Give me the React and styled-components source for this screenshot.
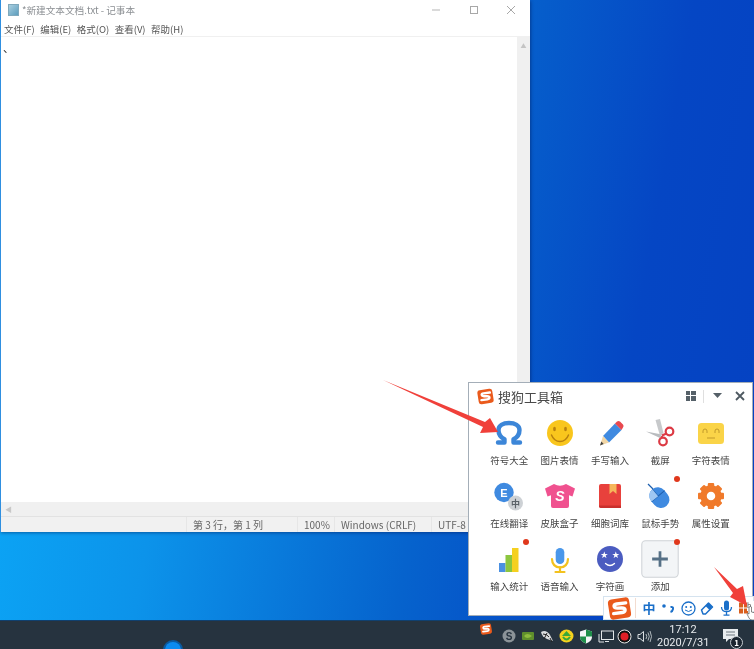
import styled, { createGlobalStyle } from "styled-components";
import { Fragment } from "react";

const GlobalStyle = createGlobalStyle`
  html, body {
    margin: 0;
    padding: 0;
    background: #0558c8;
  }
  body {
    font-family: "Noto Sans CJK SC", "Liberation Sans", sans-serif;
  }
`;

const SogouLogo = ({ size = 18 }) => (
  <svg width={size} height={size} viewBox="0 0 24 24">
    <rect x="2.5" y="3" width="19" height="18" rx="3.5" fill="#ea5a1c" transform="rotate(-9 12 12)" />
    <path d="M17.5 7 L9.5 8 Q6.8 8.4 7.2 10.2 Q7.5 11.7 10 11.7 L14 11.5 Q17 11.5 17 13.4 Q17 15.3 14.4 15.6 L6.8 16.6" fill="none" stroke="#fff" strokeWidth="3" strokeLinecap="round" />
  </svg>
);

const Omega = () => (
  <svg width="36" height="36" viewBox="0 0 36 36">
    <path d="M7 27.500h6.500v-3.200c-4-2-6-5.300-6-9.300C7.500 10.500 12 8 18 8s10.500 2.500 10.500 7c0 4-2 7.300-6 9.300v3.200H29" fill="none" stroke="#3c86d8" strokeWidth="4.400" strokeLinejoin="round" strokeLinecap="round" />
  </svg>
);

const Smile = () => (
  <svg width="36" height="36" viewBox="0 0 36 36">
    <circle cx="18" cy="18" r="13" fill="#f9c61d" />
    <ellipse cx="12.500" cy="14" rx="1.400" ry="2.200" fill="#b9810f" />
    <ellipse cx="23.500" cy="14" rx="1.400" ry="2.200" fill="#b9810f" />
    <path d="M9.500 20c2 5 5.500 6.500 8.500 6.500s6.500-1.500 8.500-6.500" fill="none" stroke="#b9810f" strokeWidth="1.500" strokeLinecap="round" />
  </svg>
);

const Pencil = () => (
  <svg width="36" height="36" viewBox="0 0 36 36">
    <path d="M11 21 23 8.500l6.500 6.500L17 27.500z" fill="#3f8ae0" />
    <path d="M23 8.500l2-2q1.500-1.200 3 0l3 3q1.200 1.500 0 3L29.500 15z" fill="#e8484f" />
    <path d="M11 21 17 27.500 8 30.500z" fill="#f1d6a6" />
    <path d="M9.300 26.500 11.700 29 8 30.500z" fill="#444" />
  </svg>
);

const Scissors = () => (
  <svg width="36" height="36" viewBox="0 0 36 36">
    <path d="M4 16.500 20 19.500 18 23z" fill="#b9bcbf" />
    <path d="M13.500 5 18 4 21.500 18 18 21z" fill="#c7c9cb" />
    <circle cx="27.500" cy="16.500" r="3.800" fill="none" stroke="#dc3a44" strokeWidth="2.200" />
    <circle cx="21" cy="26.500" r="3.800" fill="none" stroke="#dc3a44" strokeWidth="2.200" />
    <path d="M20 20.500 24.500 18.500M19.800 21 20.500 23" stroke="#dc3a44" strokeWidth="2" />
  </svg>
);

const CharFace = () => (
  <svg width="36" height="36" viewBox="0 0 36 36">
    <rect x="5" y="8" width="26" height="21" rx="3.500" fill="#fad448" />
    <path d="M10 18v-2q0-2 2-2t2 2v2M22 18v-2q0-2 2-2t2 2v2M14 23h8" fill="none" stroke="#c29a2b" strokeWidth="1" />
  </svg>
);

const Translate = () => (
  <svg width="36" height="36" viewBox="0 0 36 36">
    <circle cx="13" cy="14.500" r="9.700" fill="#3f8ae0" />
    <text x="13" y="18.500" fontSize="11" fontWeight="700" fill="#fff" textAnchor="middle" fontFamily="Liberation Sans, sans-serif">E</text>
    <circle cx="24.500" cy="25" r="7.500" fill="#cdd1d5" />
    <text x="24.500" y="28.500" fontSize="9" fontWeight="700" fill="#5b6369" textAnchor="middle" fontFamily="Noto Sans CJK SC, sans-serif">中</text>
  </svg>
);

const Shirt = () => (
  <svg width="36" height="36" viewBox="0 0 36 36">
    <path d="M12 6q6 3.500 12 0l9 4.500-2.500 8-3.500-1.300V28q0 2-2 2H11q-2 0-2-2V17.200l-3.500 1.300L3 10.500z" fill="#f0518f" />
    <text x="18" y="23" fontSize="14" fontWeight="700" fontStyle="italic" fill="#fff" textAnchor="middle" fontFamily="Liberation Sans, sans-serif">S</text>
  </svg>
);

const Book = () => (
  <svg width="36" height="36" viewBox="0 0 36 36">
    <path d="M7 8q0-2 2-2h18q2 0 2 2v22H9q-2 0-2-2z" fill="#e8413c" />
    <path d="M7 27.500h22V30H9q-2 0-2-2z" fill="#c9302d" />
    <path d="M17.500 6h7v10l-3.500-3-3.500 3z" fill="#f6b65a" />
  </svg>
);

const Mouse = () => (
  <svg width="36" height="36" viewBox="0 0 36 36">
    <g transform="rotate(-40 17 20)">
      <rect x="9" y="9" width="17" height="22" rx="8.500" fill="#3f8ae0" />
      <path d="M9 18h17M17.500 9v9" stroke="#1d5fae" strokeWidth="1" />
      <path d="M9 18a8.500 8.500 0 0 1 8.500-9v9z" fill="#9fc7f2" />
    </g>
    <path d="M6 6 11 11" stroke="#1d5fae" strokeWidth="1.200" />
  </svg>
);

const Gear = () => (
  <svg width="36" height="36" viewBox="0 0 36 36">
    <circle cx="18" cy="18" r="7.500" fill="none" stroke="#f07a2b" strokeWidth="6.500" />
    {[0, 45, 90, 135, 180, 225, 270, 315].map((a) => (
      <rect key={a} x="14.800" y="5" width="6.400" height="6" rx="1" fill="#f07a2b" transform={`rotate(${a} 18 18)`} />
    ))}
  </svg>
);

const Bars = () => (
  <svg width="36" height="36" viewBox="0 0 36 36">
    <rect x="8" y="22" width="6.500" height="9" fill="#4a90e2" />
    <rect x="14.500" y="14" width="6.500" height="17" fill="#8cc63f" />
    <rect x="21" y="7" width="6.500" height="24" fill="#f5d020" />
  </svg>
);

const Mic = () => (
  <svg width="36" height="36" viewBox="0 0 36 36">
    <rect x="13.700" y="7" width="8.600" height="16" rx="4.300" fill="#4a97ea" />
    <path d="M10 18c0 5 3.200 8.500 8 8.500s8-3.500 8-8.500" fill="none" stroke="#f3c21e" strokeWidth="2.200" strokeLinecap="round" />
    <path d="M18 26v4.500M13.500 31h9" stroke="#f3c21e" strokeWidth="2.200" strokeLinecap="round" />
  </svg>
);

const StarFace = () => (
  <svg width="36" height="36" viewBox="0 0 36 36">
    <circle cx="18" cy="18" r="13" fill="#4b5cc0" />
    <text x="12.300" y="17" fontSize="9" fill="#fff" textAnchor="middle" fontFamily="DejaVu Sans, sans-serif">★</text>
    <text x="23.700" y="17" fontSize="9" fill="#fff" textAnchor="middle" fontFamily="DejaVu Sans, sans-serif">★</text>
    <path d="M13.500 22.500q4.500 4 9 0" fill="none" stroke="#fff" strokeWidth="1.300" strokeLinecap="round" />
  </svg>
);

const Plus = () => (
  <svg width="36" height="36" viewBox="0 0 36 36">
    <path d="M18 10v16M10 18h16" stroke="#567086" strokeWidth="2.800" />
  </svg>
);

const tools = [
  { name: "符号大全", Icon: Omega },
  { name: "图片表情", Icon: Smile },
  { name: "手写输入", Icon: Pencil },
  { name: "截屏", Icon: Scissors },
  { name: "字符表情", Icon: CharFace },
  { name: "在线翻译", Icon: Translate },
  { name: "皮肤盒子", Icon: Shirt },
  { name: "细胞词库", Icon: Book },
  { name: "鼠标手势", Icon: Mouse, dot: true },
  { name: "属性设置", Icon: Gear },
  { name: "输入统计", Icon: Bars, dot: true },
  { name: "语音输入", Icon: Mic },
  { name: "字符画", Icon: StarFace },
  { name: "添加", Icon: Plus, dot: true, boxed: true },
];

const menus = ["文件(F)", "编辑(E)", "格式(O)", "查看(V)", "帮助(H)"];

const statusCells = [
  { text: "第 3 行，第 1 列", width: 111 },
  { text: "100%", width: 37 },
  { text: "Windows (CRLF)", width: 97 },
  { text: "UTF-8", width: 99 },
];

const Desktop = styled.div`
  position: relative;
  width: 754px;
  height: 649px;
  overflow: hidden;
  display: flex;
  flex-direction: column;
  background: linear-gradient(100deg, #0bacfa 0%, #0c93ea 28%, #0663cd 58%, #0546c4 80%, #0541c2 100%);
  filter: blur(0.35px);
`;

const Workspace = styled.div`
  flex: 1;
  min-height: 0;
`;

const Notepad = styled.div`
  width: 530px;
  height: 532px;
  box-sizing: border-box;
  display: flex;
  flex-direction: column;
  background: #fff;
  border-left: 1.500px solid #2f8fe0;
  box-shadow: 1px 1px 3px rgba(0, 20, 80, 0.45);
`;

const TitleBar = styled.div`
  height: 19px;
  flex-shrink: 0;
  display: flex;
  align-items: center;
  padding-left: 7px;
  font-size: 9.650px;
  color: #8b8f93;
`;

const DocIcon = styled.span`
  width: 11px;
  height: 12px;
  margin-right: 3px;
  background: linear-gradient(135deg, #a9cfe0, #5d9dbd);
  border: 1px solid #7fa9bd;
  box-sizing: border-box;
`;

const WindowButtons = styled.div`
  margin-left: auto;
  display: flex;
`;

const WindowButton = styled.span`
  width: 37.500px;
  display: flex;
  justify-content: center;
`;

const MenuBar = styled.div`
  height: 18px;
  flex-shrink: 0;
  box-sizing: border-box;
  display: flex;
  align-items: center;
  gap: 5.500px;
  padding: 2px 0 0 3px;
  font-size: 9.500px;
  color: #555;
  border-bottom: 1px solid #f0f0f0;
`;

const Body = styled.div`
  flex: 1;
  min-height: 0;
  display: flex;
`;

const Editor = styled.div`
  flex: 1;
  padding: 3px 2px;
  font-size: 11px;
  line-height: 14px;
  color: #222;
`;

const VScroll = styled.div`
  width: 13px;
  background: #f0f0f0;
  color: #c4c4c4;
  font-size: 6px;
  text-align: center;
  padding-top: 4px;
  box-sizing: border-box;
`;

const HScroll = styled.div`
  height: 14px;
  flex-shrink: 0;
  background: #f0f0f0;
  color: #c8c8c8;
  font-size: 7px;
  line-height: 14px;
  padding-left: 4px;
`;

const StatusBar = styled.div`
  height: 16px;
  flex-shrink: 0;
  box-sizing: border-box;
  display: flex;
  padding-left: 185px;
  background: #f1f1f1;
  border-top: 1px solid #e2e2e2;
  font-size: 10px;
  line-height: 15px;
  color: #666;
`;

const StatusCell = styled.div`
  width: ${(p) => p.$w}px;
  flex-shrink: 0;
  padding-left: 6px;
  box-sizing: border-box;
  border-left: 1px solid #e6e6e6;
  white-space: nowrap;
`;

const ToolBox = styled.div`
  position: absolute;
  left: 468px;
  top: 382px;
  width: 285px;
  height: 234px;
  box-sizing: border-box;
  background: #fff;
  border: 1px solid #a4aeb8;
  padding: 0 0 0 15px;
`;

const BoxHeader = styled.div`
  height: 26px;
  display: flex;
  align-items: center;
  margin-left: -8px;
  padding-right: 7px;
`;

const BoxTitle = styled.span`
  font-size: 13px;
  color: #4a4a4a;
  margin-left: 3px;
`;

const HeaderTools = styled.div`
  margin-left: auto;
  display: flex;
  align-items: center;
`;

const Divider = styled.span`
  width: 1px;
  height: 13px;
  background: #dfdfdf;
  margin: 0 9px 0 7px;
`;

const CloseIcon = styled.svg`
  margin-left: 13px;
`;

const ToolGrid = styled.div`
  margin-top: 6px;
  display: grid;
  grid-template-columns: repeat(5, 50.400px);
  grid-auto-rows: 63px;
`;

const Tool = styled.div`
  position: relative;
  display: flex;
  flex-direction: column;
  align-items: center;
`;

const ToolIcon = styled.div`
  width: 36px;
  height: 36px;
  box-sizing: border-box;
  display: flex;
  align-items: center;
  justify-content: center;
  ${(p) =>
    p.$boxed &&
    `
    border: 1px solid #cfd3d7;
    border-radius: 4px;
    background: #f3f5f7;
    transform: scale(1.040);
  `}
`;

const ToolLabel = styled.span`
  margin-top: 2px;
  font-size: 9.500px;
  line-height: 14px;
  color: #444;
  white-space: nowrap;
`;

const RedDot = styled.i`
  position: absolute;
  top: -2px;
  right: 5.500px;
  width: 6px;
  height: 6px;
  border-radius: 50%;
  background: #e0381c;
`;

const ImeBar = styled.div`
  position: absolute;
  left: 603px;
  top: 596px;
  width: 151px;
  height: 24px;
  box-sizing: border-box;
  display: flex;
  align-items: center;
  background: #fff;
  border: 1px solid #d5e3ef;
  padding-left: 2px;
`;

const ImeDivider = styled.span`
  width: 1px;
  height: 20px;
  background: #f2dcd0;
  margin: 0 3px 0 2px;
`;

const ImeSlot = styled.span`
  width: ${(p) => p.$w}px;
  display: flex;
  justify-content: center;
  flex-shrink: 0;
  color: #1a6fc9;
  font-size: 13px;
  font-weight: 700;
  line-height: 20px;
`;

const Tip = styled.span`
  position: absolute;
  right: -1px;
  top: 4px;
  width: 7px;
  height: 10px;
  background: #fff;
  font-size: 7px;
  line-height: 9px;
  color: #333;
`;

const Cursor = styled.svg`
  position: absolute;
  left: 746px;
  top: 606px;
`;

const Taskbar = styled.div`
  height: 29px;
  flex-shrink: 0;
  display: flex;
  overflow: hidden;
  background: #26333f;
  border-top: 1px solid #10406f;
  box-sizing: border-box;
  padding-right: 10px;
`;

const RunningDot = styled.span`
  width: 16px;
  height: 16px;
  margin: 21px 0 0 165px;
  border-radius: 50%;
  background: #0b8bf0;
  box-shadow: 0 0 0 2px #0a5aa0;
`;

const TrayLogo = styled.span`
  margin: 1px 6px 0 auto;
  display: flex;
  height: 14px;
`;

const TraySlot = styled.span`
  width: 19.400px;
  flex-shrink: 0;
  display: flex;
  align-items: center;
  justify-content: center;
  padding-top: 2px;
`;

const Clock = styled.div`
  width: 52px;
  margin-left: 3px;
  padding-top: 1.500px;
  text-align: center;
  font-family: Roboto, "Liberation Sans", sans-serif;
  font-size: 11px;
  line-height: 13px;
  color: #e8ecef;
  white-space: nowrap;
`;

const Notice = styled.span`
  position: relative;
  width: 28px;
  margin-left: 7px;
  display: flex;
  justify-content: center;
  padding-top: 8px;
`;

const NoticeCount = styled.b`
  position: absolute;
  right: 1px;
  bottom: 0;
  width: 13px;
  height: 13px;
  border-radius: 50%;
  background: #1b2530;
  border: 1px solid #c8ced3;
  box-sizing: border-box;
  color: #fff;
  font-size: 8px;
  line-height: 11px;
  text-align: center;
`;

const ArrowLayer = styled.svg`
  position: absolute;
  left: 0;
  top: 0;
  pointer-events: none;
`;

const NotepadWindow = () => (
  <Notepad>
    <TitleBar>
      <DocIcon />
      *新建文本文档.txt - 记事本
      <WindowButtons>
        <WindowButton>
          <svg width="10" height="10" viewBox="0 0 10 10">
            <path d="M1 5h8" stroke="#b5b5b5" />
          </svg>
        </WindowButton>
        <WindowButton>
          <svg width="10" height="10" viewBox="0 0 10 10">
            <rect x="1.500" y="1.500" width="7" height="7" fill="none" stroke="#a8a8a8" />
          </svg>
        </WindowButton>
        <WindowButton>
          <svg width="10" height="10" viewBox="0 0 10 10">
            <path d="M1 1l8 8M9 1l-8 8" stroke="#a8a8a8" />
          </svg>
        </WindowButton>
      </WindowButtons>
    </TitleBar>
    <MenuBar>
      {menus.map((m) => (
        <span key={m}>{m}</span>
      ))}
    </MenuBar>
    <Body>
      <Editor>、</Editor>
      <VScroll>▲</VScroll>
    </Body>
    <HScroll>◀</HScroll>
    <StatusBar>
      {statusCells.map((c) => (
        <StatusCell key={c.text} $w={c.width}>
          {c.text}
        </StatusCell>
      ))}
    </StatusBar>
  </Notepad>
);

const App = () => {
  return (
    <Fragment>
      <GlobalStyle />
      <Desktop>
        <Workspace>
          <NotepadWindow />
        </Workspace>

        <ToolBox>
          <BoxHeader>
            <SogouLogo size={19} />
            <BoxTitle>搜狗工具箱</BoxTitle>
            <HeaderTools>
              <svg width="10" height="10" viewBox="0 0 10 10">
                <path d="M0 0h4v4H0zM5 0h5v4H5zM0 5h4v5H0zM5 5h5v5H5z" fill="#556068" />
              </svg>
              <Divider />
              <svg width="9" height="6" viewBox="0 0 9 6">
                <path d="M0 0h9L4.500 5z" fill="#556068" />
              </svg>
              <CloseIcon width="10" height="10" viewBox="0 0 10 10">
                <path d="M1 1l8 8M9 1l-8 8" stroke="#4e5961" strokeWidth="1.800" />
              </CloseIcon>
            </HeaderTools>
          </BoxHeader>
          <ToolGrid>
            {tools.map(({ name, Icon, dot, boxed }) => (
              <Tool key={name}>
                <ToolIcon $boxed={boxed}>
                  <Icon />
                </ToolIcon>
                <ToolLabel>{name}</ToolLabel>
                {dot && <RedDot />}
              </Tool>
            ))}
          </ToolGrid>
        </ToolBox>

        <ImeBar>
          <SogouLogo size={27} />
          <ImeDivider />
          <ImeSlot $w={20}>中</ImeSlot>
          <ImeSlot $w={18}>
            <svg width="14" height="12" viewBox="0 0 14 12">
              <circle cx="3" cy="4" r="1.800" fill="#1a6fc9" />
              <path d="M9.500 5q3-.5 2.500 2T9.500 10" fill="none" stroke="#1a6fc9" strokeWidth="2" />
            </svg>
          </ImeSlot>
          <ImeSlot $w={22}>
            <svg width="15" height="15" viewBox="0 0 15 15">
              <circle cx="7.500" cy="7.500" r="6.500" fill="#fff" stroke="#1a6fc9" strokeWidth="1.300" />
              <circle cx="5.200" cy="6" r="1" fill="#1a6fc9" />
              <circle cx="9.800" cy="6" r="1" fill="#1a6fc9" />
              <path d="M4 9q3.500 3 7 0" fill="none" stroke="#1a6fc9" />
            </svg>
          </ImeSlot>
          <ImeSlot $w={16}>
            <svg width="14" height="14" viewBox="0 0 14 14">
              <path d="M1.500 9 8.500 2l4 4-7 7H3z" fill="#fff" stroke="#1a6fc9" strokeWidth="1.500" strokeLinejoin="round" />
              <path d="M8.500 2l4 4-3 3-4-4z" fill="#1a6fc9" />
            </svg>
          </ImeSlot>
          <ImeSlot $w={22}>
            <svg width="13" height="16" viewBox="0 0 13 16">
              <rect x="4" y="0.500" width="5" height="10" rx="2.500" fill="#1a6fc9" />
              <path d="M1.500 7c0 3 2 4.700 5 4.700s5-1.700 5-4.700M6.500 11.500V15M3.500 15.200h6" fill="none" stroke="#1a6fc9" strokeWidth="1.300" />
            </svg>
          </ImeSlot>
          <ImeSlot $w={12}>
            <svg width="9" height="12" viewBox="0 0 10 12">
              <path d="M0 0h4.500v5.500H0zM5.500 0H10v5.500H5.500zM0 6.500h4.500V12H0zM5.500 6.500H10V12H5.500z" fill="#d95f1e" />
            </svg>
          </ImeSlot>
          <Tip>h</Tip>
        </ImeBar>

        <Cursor width="12" height="15" viewBox="0 0 12 15">
          <path d="M3 1q1.500-1 2.500 0v5l4 1q1.500.5 1.500 2v2q0 3-3 3H6q-2 0-3-2L1 8q0-1.500 2 0z" fill="#fff" stroke="#555" strokeWidth="0.700" />
        </Cursor>

        <ArrowLayer width="754" height="649" viewBox="0 0 754 649">
          <path d="M383 380 485 422 490 418 498 432 480 433 483 427z" fill="#f0403a" />
          <path d="M714 567 737 589 743 586 747 606 730 597 733 593z" fill="#f0403a" />
        </ArrowLayer>

        <Taskbar>
          <RunningDot />
          <TrayLogo>
            <SogouLogo size={14} />
          </TrayLogo>
          <TraySlot>
            <svg width="14" height="14" viewBox="0 0 14 14">
              <circle cx="7" cy="7" r="6.500" fill="#8b9398" />
              <text x="7" y="10.500" fontSize="10" fontWeight="700" fill="#26333f" textAnchor="middle" fontFamily="Liberation Sans, sans-serif">S</text>
            </svg>
          </TraySlot>
          <TraySlot>
            <svg width="14" height="10" viewBox="0 0 14 10">
              <rect x="1" y="1" width="12" height="8" rx="1" fill="#5f8f2c" />
              <path d="M3 5q3-4 8 0-5 4-8 0z" fill="#8dbb3e" />
            </svg>
          </TraySlot>
          <TraySlot>
            <svg width="16" height="16" viewBox="0 0 16 16">
              <path d="M2 4q5-3 9 3l3 6-6-2Q3 9 2 4z" fill="#d9dcde" />
              <path d="M4 6q4 0 6 3M8 5l-3 6M11 10l2 4" fill="none" stroke="#222" />
            </svg>
          </TraySlot>
          <TraySlot>
            <svg width="15" height="14" viewBox="0 0 15 14">
              <ellipse cx="7.500" cy="7" rx="7" ry="6.500" fill="#f4d21f" />
              <path d="M7.500 2 12 7H3z" fill="#39a83a" />
              <path d="M4 8q3.500 5 7 0" fill="none" stroke="#39a83a" strokeWidth="2" />
            </svg>
          </TraySlot>
          <TraySlot>
            <svg width="14" height="15" viewBox="0 0 14 15">
              <path d="M7 0.500 13 2.500V8q0 4-6 6.500Q1 12 1 8V2.500z" fill="#f4f6f7" />
              <path d="M7 7.500H1V8q0 4 6 6.500zM7 7.500h6V2.500L7 .5z" fill="#1f8f4a" />
            </svg>
          </TraySlot>
          <TraySlot>
            <svg width="16" height="13" viewBox="0 0 16 13">
              <rect x="3.500" y="1" width="12" height="8.500" fill="none" stroke="#e2e6e9" />
              <path d="M1 4v8h5M7 11.500h4" fill="none" stroke="#e2e6e9" />
            </svg>
          </TraySlot>
          <TraySlot>
            <svg width="15" height="15" viewBox="0 0 15 15">
              <circle cx="7.500" cy="7.500" r="6.500" fill="#111" stroke="#e8e8e8" />
              <circle cx="7.500" cy="7.500" r="4" fill="#e01f26" />
            </svg>
          </TraySlot>
          <TraySlot>
            <svg width="15" height="13" viewBox="0 0 15 13">
              <path d="M1 4.500h2L6.500 1.500v10L3 8.500H1z" fill="none" stroke="#d8dde0" />
              <path d="M9 4q1.500 2.500 0 5M11 2.500q2.500 4 0 8M13 1q3 5.500 0 11" fill="none" stroke="#c2c9cd" strokeWidth="0.900" />
            </svg>
          </TraySlot>
          <Clock>
            <div>17:12</div>
            <div>2020/7/31</div>
          </Clock>
          <Notice>
            <svg width="15" height="13" viewBox="0 0 15 13">
              <path d="M0 0h15v10H6l-3 3v-3H0z" fill="#e8ecef" />
              <path d="M3 3h9M3 6h9" stroke="#6e7880" />
            </svg>
            <NoticeCount>1</NoticeCount>
          </Notice>
        </Taskbar>
      </Desktop>
    </Fragment>
  );
};

export default App;
